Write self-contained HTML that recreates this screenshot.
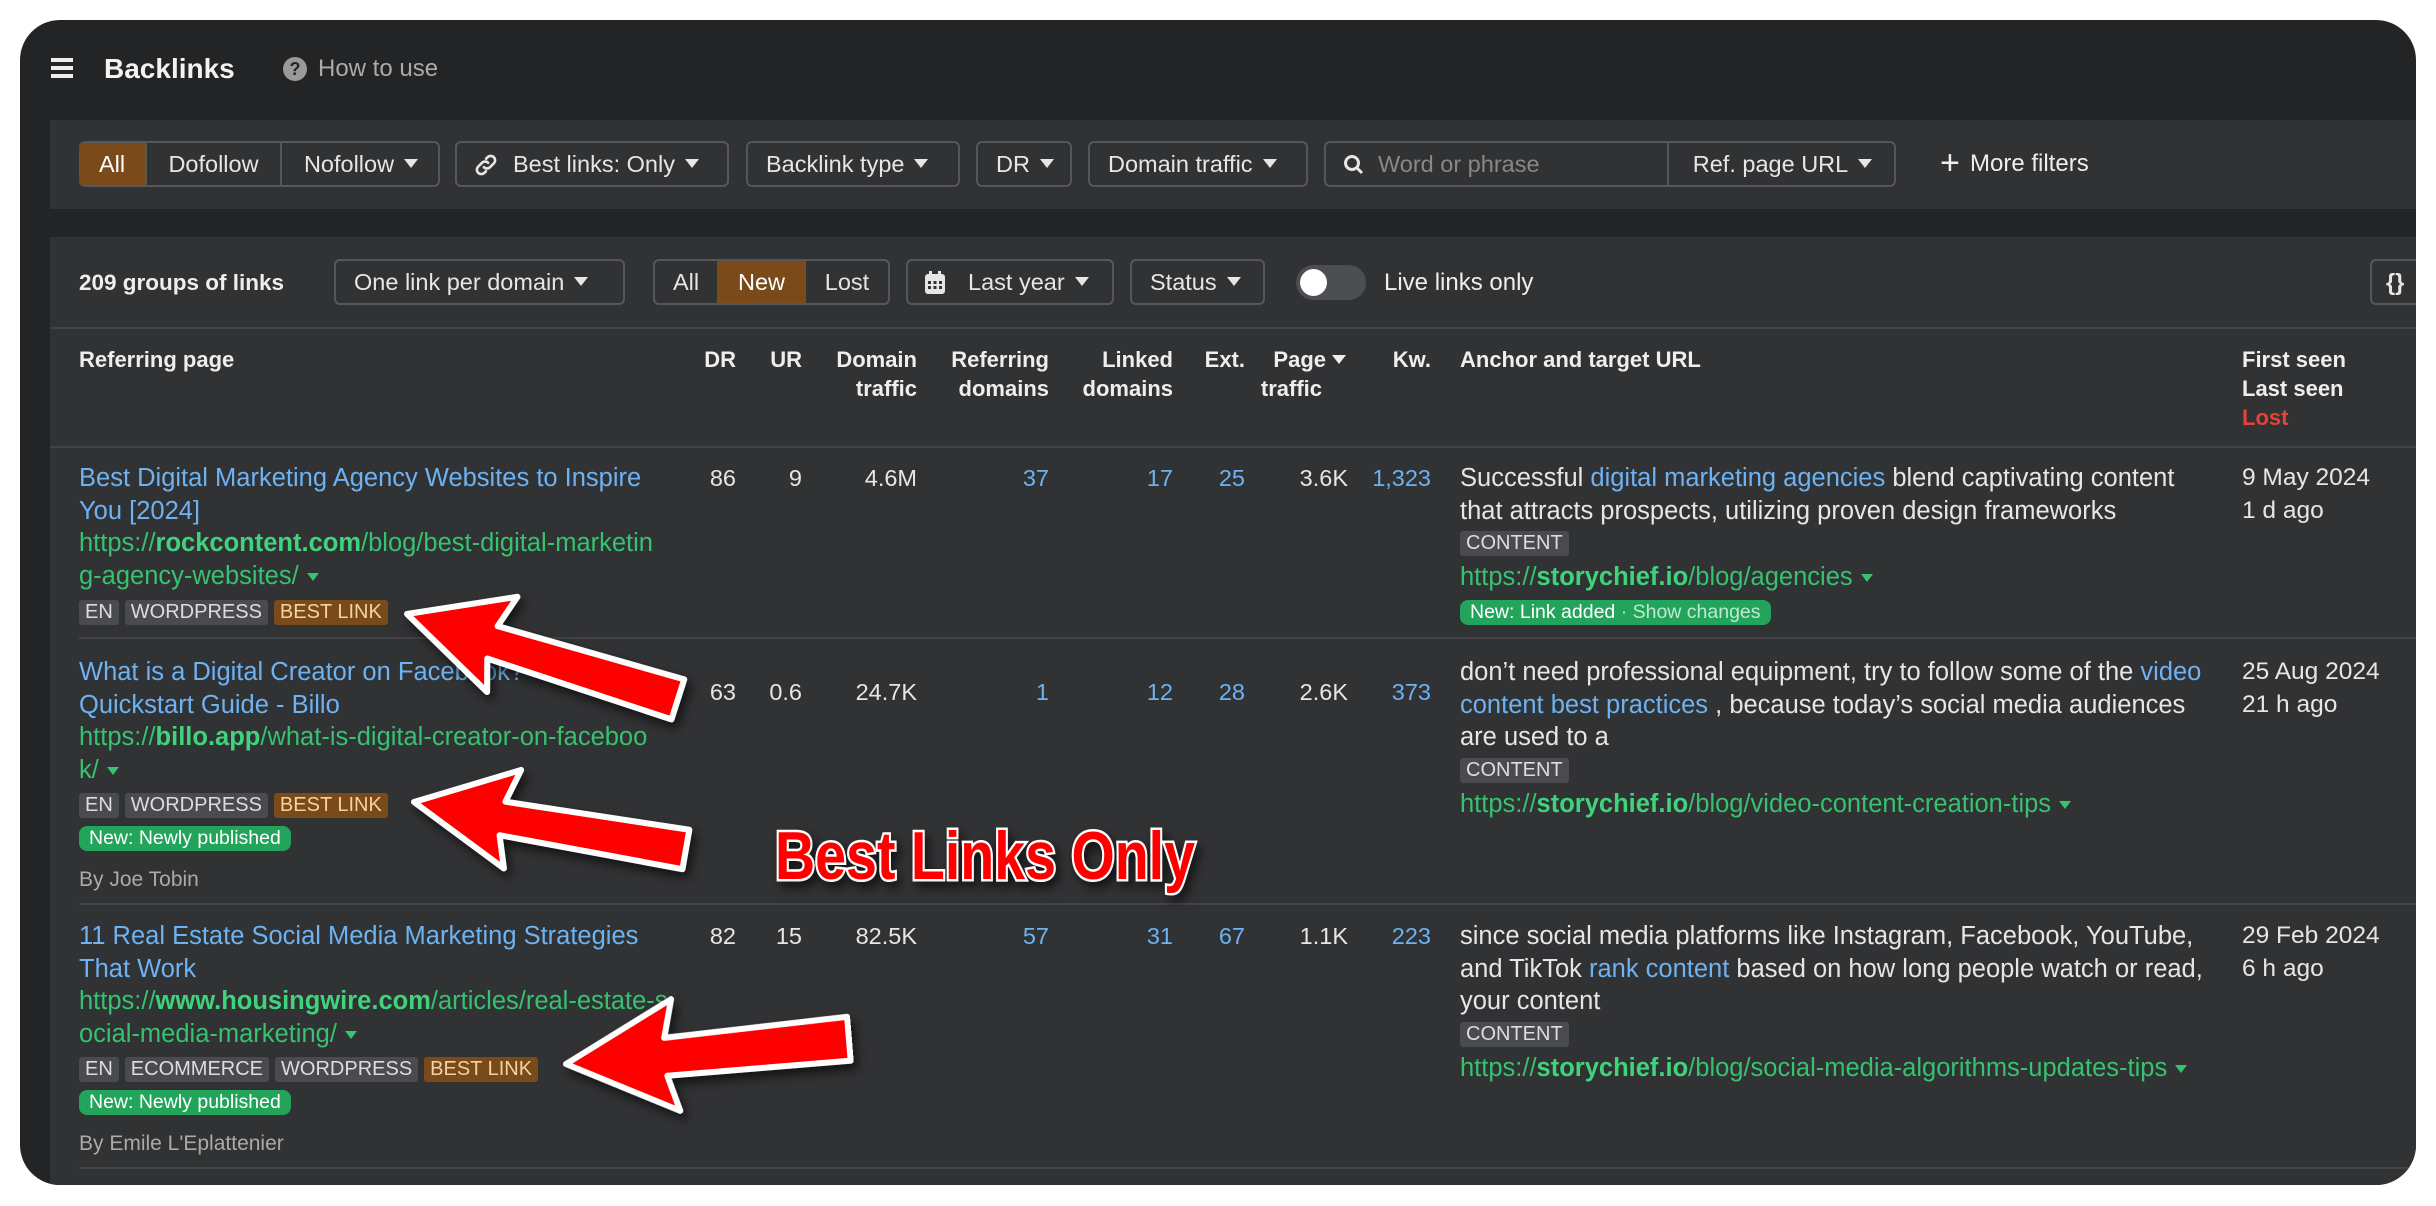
<!DOCTYPE html>
<html><head><meta charset="utf-8"><style>
*{box-sizing:border-box;margin:0;padding:0}
body{width:2436px;height:1206px;background:#fff;font-family:"Liberation Sans",Arial,sans-serif;position:relative;overflow:hidden;color:#e6e6e6}
.card{position:absolute;left:20px;top:20px;width:2396px;height:1165px;background:#232426;border-radius:40px;overflow:hidden}
.a{position:absolute;white-space:nowrap}
.panel{position:absolute;left:30px;right:0;background:#313234}
.btn{position:absolute;height:46px;border:2px solid #55575a;border-radius:6px;font-size:23.5px;line-height:42px;color:#e6e6e6;padding:0 18px;white-space:nowrap}
.car{display:inline-block;width:0;height:0;border-left:7px solid transparent;border-right:7px solid transparent;border-top:9px solid #e6e6e6;margin-left:10px;vertical-align:middle;position:relative;top:-2px}
.seg{position:absolute;top:0;bottom:0;border-left:2px solid #55575a;text-align:center}
.th{font-size:22px;font-weight:bold;line-height:29px;color:#eee;position:absolute;white-space:nowrap}
.hl{position:absolute;left:30px;right:0;height:2px;background:#424346}
.rl{position:absolute;left:59px;right:0;height:2px;background:#424346}
.t{font-size:25.5px;line-height:32.5px;white-space:nowrap}
.d{font-size:24.5px;line-height:32.5px;white-space:nowrap}
.blue{color:#6db2f2}.green{color:#36c26f}.green b{color:#3fd37b}
.num{position:absolute;font-size:23.5px;line-height:32px;text-align:right;white-space:nowrap}
.tag{display:inline-block;background:#4a4b4e;color:#ddd;font-size:20px;line-height:25px;padding:0 6px;border-radius:3px;margin-right:6px;vertical-align:middle}
.tag.o{background:#7a4a1a;color:#f3d3a4}
.badge{display:inline-block;background:#22a45a;color:#fff;font-size:19.5px;line-height:25px;padding:0 10px;border-radius:8px}
.gc{display:inline-block;width:0;height:0;border-left:6px solid transparent;border-right:6px solid transparent;border-top:8px solid #36c26f;margin-left:8px;vertical-align:middle}
.by{color:#aaa;font-size:21px}
</style></head><body>
<div class="card">
 <div class="a" style="left:31px;top:38px;width:22px;height:4px;background:#eee;box-shadow:0 8px 0 #eee,0 16px 0 #eee"></div>
 <div class="a" style="left:84px;top:32px;font-size:28px;font-weight:bold;color:#f2f2f2;line-height:34px">Backlinks</div>
 <div class="a" style="left:263px;top:37px;width:24px;height:24px;border-radius:50%;background:#9a9a9a;color:#232426;font-size:18px;font-weight:bold;text-align:center;line-height:24px">?</div>
 <div class="a" style="left:298px;top:34px;font-size:24px;color:#aaa;line-height:30px">How to use</div>

 <div class="panel" style="top:100px;height:89px"></div>
 <div class="btn" style="left:59px;top:121px;width:361px;padding:0">
  <div class="seg" style="left:-2px;width:66px;border:none;background:#7a4a1a;border-radius:5px 0 0 5px;color:#fff">All</div>
  <div class="seg" style="left:64px;width:135px">Dofollow</div>
  <div class="seg" style="left:199px;width:160px">Nofollow<span class="car"></span></div>
 </div>
 <div class="btn" style="left:435px;top:121px;width:274px;padding-left:56px">Best links: Only<span class="car"></span>
  <svg style="position:absolute;left:16px;top:9px" width="26" height="26" viewBox="0 0 24 24" fill="none" stroke="#e6e6e6" stroke-width="2.4" stroke-linecap="round"><path d="M10 14a4 4 0 0 0 5.7 0l3.5-3.5a4 4 0 0 0-5.7-5.7L12 6.3"/><path d="M14 10a4 4 0 0 0-5.7 0l-3.5 3.5a4 4 0 0 0 5.7 5.7L12 17.7"/></svg></div>
 <div class="btn" style="left:726px;top:121px;width:214px">Backlink type<span class="car"></span></div>
 <div class="btn" style="left:956px;top:121px;width:96px">DR<span class="car"></span></div>
 <div class="btn" style="left:1068px;top:121px;width:220px">Domain traffic<span class="car"></span></div>
 <div class="btn" style="left:1304px;top:121px;width:572px;padding:0">
  <svg style="position:absolute;left:16px;top:10px" width="24" height="24" viewBox="0 0 24 24" fill="none" stroke="#e6e6e6" stroke-width="3"><circle cx="10" cy="10" r="6.5"/><path d="M15 15l5 5"/></svg>
  <span style="position:absolute;left:52px;color:#888">Word or phrase</span>
  <div class="seg" style="left:341px;width:229px">Ref. page URL<span class="car"></span></div>
 </div>
 <div class="a" style="left:1920px;top:130px;font-size:34px;line-height:26px;color:#eee;font-weight:300">+</div>
 <div class="a" style="left:1950px;top:131px;font-size:24px;line-height:26px;color:#eee">More filters</div>

 <div class="panel" style="top:217px;bottom:0"></div>
 <div class="a" style="left:59px;top:250px;font-size:22.5px;font-weight:bold;color:#eee;line-height:26px">209 groups of links</div>
 <div class="btn" style="left:314px;top:239px;width:291px">One link per domain<span class="car"></span></div>
 <div class="btn" style="left:633px;top:239px;width:237px;padding:0">
  <div class="seg" style="left:-2px;width:66px;border:none">All</div>
  <div class="seg" style="left:62px;width:89px;border:none;background:#7a4a1a;color:#fff">New</div>
  <div class="seg" style="left:151px;width:82px;border:none">Lost</div>
 </div>
 <div class="btn" style="left:886px;top:239px;width:208px;padding-left:60px">Last year<span class="car"></span>
  <svg style="position:absolute;left:16px;top:10px" width="22" height="24" viewBox="0 0 22 24"><rect x="1" y="3" width="20" height="20" rx="3" fill="#e6e6e6"/><rect x="5" y="0" width="3" height="6" fill="#e6e6e6"/><rect x="14" y="0" width="3" height="6" fill="#e6e6e6"/><g fill="#313234"><rect x="4" y="10" width="3" height="3"/><rect x="9.5" y="10" width="3" height="3"/><rect x="15" y="10" width="3" height="3"/><rect x="4" y="15" width="3" height="3"/><rect x="9.5" y="15" width="3" height="3"/><rect x="15" y="15" width="3" height="3"/></g></svg></div>
 <div class="btn" style="left:1110px;top:239px;width:135px">Status<span class="car"></span></div>
 <div class="a" style="left:1276px;top:245px;width:70px;height:35px;border-radius:18px;background:#4d4e51"></div>
 <div class="a" style="left:1280px;top:249px;width:27px;height:27px;border-radius:50%;background:#fff"></div>
 <div class="a" style="left:1364px;top:249px;font-size:24px;line-height:28px;color:#eee">Live links only</div>
 <div class="btn" style="left:2350px;top:239px;width:80px;padding-left:14px;font-weight:bold">{}</div>

 <div class="hl" style="top:307px"></div>
 <div class="th" style="left:59px;top:325px">Referring page</div>
 <div class="th" style="left:680px;top:325px;width:36px;text-align:right">DR</div>
 <div class="th" style="left:740px;top:325px;width:42px;text-align:right">UR</div>
 <div class="th" style="left:790px;top:325px;width:107px;text-align:right">Domain<br>traffic</div>
 <div class="th" style="left:910px;top:325px;width:119px;text-align:right">Referring<br>domains</div>
 <div class="th" style="left:1040px;top:325px;width:113px;text-align:right">Linked<br>domains</div>
 <div class="th" style="left:1180px;top:325px;width:45px;text-align:right">Ext.</div>
 <div class="th" style="left:1230px;top:325px;width:98px;text-align:right">Page<span class="car" style="border-top-color:#eee;margin-left:6px;margin-right:2px"></span><br><span style="margin-right:26px">traffic</span></div>
 <div class="th" style="left:1340px;top:325px;width:71px;text-align:right">Kw.</div>
 <div class="th" style="left:1440px;top:325px">Anchor and target URL</div>
 <div class="th" style="left:2222px;top:325px">First seen<br>Last seen<br><span style="color:#e8403a">Lost</span></div>
 <div class="hl" style="top:426px"></div>

 <!-- row 1 -->
 <div class="a" style="left:59px;top:442px">
  <div class="t blue">Best Digital Marketing Agency Websites to Inspire<br>You [2024]</div>
  <div class="t green">https://<b>rockcontent.com</b>/blog/best-digital-marketin<br>g-agency-websites/<span class="gc"></span></div>
  <div style="margin-top:8px;height:32px"><span class="tag">EN</span><span class="tag">WORDPRESS</span><span class="tag o">BEST LINK</span></div>
 </div>
 <div class="num" style="left:650px;top:442px;width:66px">86</div>
 <div class="num" style="left:720px;top:442px;width:62px">9</div>
 <div class="num" style="left:800px;top:442px;width:97px">4.6M</div>
 <div class="num blue" style="left:950px;top:442px;width:79px">37</div>
 <div class="num blue" style="left:1070px;top:442px;width:83px">17</div>
 <div class="num blue" style="left:1160px;top:442px;width:65px">25</div>
 <div class="num" style="left:1230px;top:442px;width:98px">3.6K</div>
 <div class="num blue" style="left:1330px;top:442px;width:81px">1,323</div>
 <div class="a" style="left:1440px;top:442px">
  <div class="t">Successful <span class="blue">digital marketing agencies</span> blend captivating content<br>that attracts prospects, utilizing proven design frameworks</div>
  <div style="height:34px;line-height:34px"><span class="tag">CONTENT</span></div>
  <div class="t green">https://<b>storychief.io</b>/blog/agencies<span class="gc"></span></div>
  <div style="margin-top:6px"><span class="badge">New: Link added <span style="color:#bfe9cf">· Show changes</span></span></div>
 </div>
 <div class="a d" style="left:2222px;top:442px">9 May 2024<br>1 d ago</div>
 <div class="rl" style="top:617px"></div>

 <!-- row 2 -->
 <div class="a" style="left:59px;top:636px">
  <div class="t blue">What is a Digital Creator on Facebook?<br>Quickstart Guide - Billo</div>
  <div class="t green">https://<b>billo.app</b>/what-is-digital-creator-on-faceboo<br>k/<span class="gc"></span></div>
  <div style="margin-top:4px;height:34px;line-height:32px"><span class="tag">EN</span><span class="tag">WORDPRESS</span><span class="tag o">BEST LINK</span></div>
  <div style="margin-top:2px;height:42px"><span class="badge">New: Newly published</span></div>
  <div class="by">By Joe Tobin</div>
 </div>
 <div class="num" style="left:650px;top:656px;width:66px">63</div>
 <div class="num" style="left:720px;top:656px;width:62px">0.6</div>
 <div class="num" style="left:800px;top:656px;width:97px">24.7K</div>
 <div class="num blue" style="left:950px;top:656px;width:79px">1</div>
 <div class="num blue" style="left:1070px;top:656px;width:83px">12</div>
 <div class="num blue" style="left:1160px;top:656px;width:65px">28</div>
 <div class="num" style="left:1230px;top:656px;width:98px">2.6K</div>
 <div class="num blue" style="left:1330px;top:656px;width:81px">373</div>
 <div class="a" style="left:1440px;top:636px">
  <div class="t">don’t need professional equipment, try to follow some of the <span class="blue">video</span><br><span class="blue">content best practices</span> , because today’s social media audiences<br>are used to a</div>
  <div style="height:34px;line-height:34px"><span class="tag">CONTENT</span></div>
  <div class="t green">https://<b>storychief.io</b>/blog/video-content-creation-tips<span class="gc"></span></div>
 </div>
 <div class="a d" style="left:2222px;top:636px">25 Aug 2024<br>21 h ago</div>
 <div class="rl" style="top:883px"></div>

 <!-- row 3 -->
 <div class="a" style="left:59px;top:900px">
  <div class="t blue">11 Real Estate Social Media Marketing Strategies<br>That Work</div>
  <div class="t green">https://<b>www.housingwire.com</b>/articles/real-estate-s<br>ocial-media-marketing/<span class="gc"></span></div>
  <div style="margin-top:4px;height:34px;line-height:32px"><span class="tag">EN</span><span class="tag">ECOMMERCE</span><span class="tag">WORDPRESS</span><span class="tag o">BEST LINK</span></div>
  <div style="margin-top:2px;height:42px"><span class="badge">New: Newly published</span></div>
  <div class="by">By Emile L'Eplattenier</div>
 </div>
 <div class="num" style="left:650px;top:900px;width:66px">82</div>
 <div class="num" style="left:720px;top:900px;width:62px">15</div>
 <div class="num" style="left:800px;top:900px;width:97px">82.5K</div>
 <div class="num blue" style="left:950px;top:900px;width:79px">57</div>
 <div class="num blue" style="left:1070px;top:900px;width:83px">31</div>
 <div class="num blue" style="left:1160px;top:900px;width:65px">67</div>
 <div class="num" style="left:1230px;top:900px;width:98px">1.1K</div>
 <div class="num blue" style="left:1330px;top:900px;width:81px">223</div>
 <div class="a" style="left:1440px;top:900px">
  <div class="t">since social media platforms like Instagram, Facebook, YouTube,<br>and TikTok <span class="blue">rank content</span> based on how long people watch or read,<br>your content</div>
  <div style="height:34px;line-height:34px"><span class="tag">CONTENT</span></div>
  <div class="t green">https://<b>storychief.io</b>/blog/social-media-algorithms-updates-tips<span class="gc"></span></div>
 </div>
 <div class="a d" style="left:2222px;top:900px">29 Feb 2024<br>6 h ago</div>
 <div class="rl" style="top:1147px"></div>
</div>

<svg class="a" style="left:0;top:0" width="2436" height="1206">
 <defs><filter id="sh" x="-20%" y="-20%" width="140%" height="140%"><feDropShadow dx="4" dy="6" stdDeviation="5" flood-color="#000" flood-opacity="0.6"/></filter></defs>
 <g fill="#ff0000" stroke="#fff" stroke-width="6" stroke-linejoin="round" filter="url(#sh)">
  <polygon transform="translate(407,614) rotate(17.7)" points="0,0 100,-50 90,-16 284,-22 284,20 90,18 100,50"/>
  <polygon transform="translate(414,802) rotate(9.9)" points="0,0 100,-50 90,-16 276,-20 276,20 90,18 100,50"/>
  <polygon transform="translate(566,1064) rotate(-4.7)" points="0,0 110,-56 100,-18 284,-24 284,20 100,20 110,56"/>
 </g>
 <text x="775" y="879" font-family="Liberation Sans, Arial, sans-serif" font-weight="bold" font-size="68" fill="#ff0000" stroke="#fff" stroke-width="5" paint-order="stroke" filter="url(#sh)" textLength="420" lengthAdjust="spacingAndGlyphs">Best Links Only</text>
</svg>
</body></html>
